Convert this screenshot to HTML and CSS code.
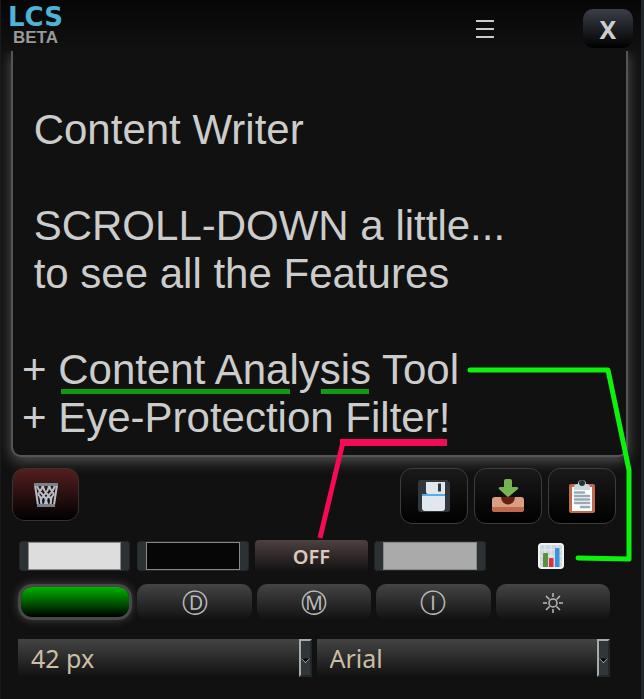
FILE: index.html
```
<!DOCTYPE html>
<html lang="en">
<head>
    <meta charset="UTF-8">
    <meta name="viewport" content="width=device-width, initial-scale=1.0">
    <title>LCS Content Writer</title>
    <link rel="stylesheet" href="styles.css">
</head>
<body>
    <div class="app">
        <header class="topbar">
            <a class="logo" href="#"><span class="logo-name">LCS</span><span class="logo-tag">BETA</span></a>
            <button class="menu-btn" type="button" aria-label="Menu">
                <svg width="20" height="20" viewBox="0 0 20 20">
                    <path d="M1 2h18M1 10h18M1 18h18" stroke="#ccc" stroke-width="2"/>
                </svg>
            </button>
            <button class="close-btn" type="button">X</button>
        </header>

        <textarea class="editor" aria-label="Content" spellcheck="false">
 Content Writer

 SCROLL-DOWN a little...
 to see all the Features

+ Content Analysis Tool
+ Eye-Protection Filter!</textarea>

        <div class="actions">
            <button class="action-btn trash" type="button" aria-label="Clear">
                <svg width="26" height="26" viewBox="0 0 26 26">
                    <path d="M2 3l3 20M24 3l-3 20M4 3q1 5 6 10t1 10M10 3q0 5 5 10t2 10M16 3q1 5 5 9M22 3q-1 5-6 10t-1 10M16 3q0 5-5 10t-2 10M10 3q-1 5-5 9M5 12q4 4 3 11M21 12q-4 4-3 11" fill="none" stroke="#b4bec6" stroke-width="2"/>
                    <path d="M1 1h24v3H1zM4 22h18v3H4z" fill="#78828a"/>
                </svg>
            </button>
            <button class="action-btn save" type="button" aria-label="Save">
                <svg width="34" height="34" viewBox="0 0 34 34">
                    <path d="M4 1h26l3 3v26a3 3 0 0 1-3 3H4a3 3 0 0 1-3-3V4a3 3 0 0 1 3-3z" fill="#31373d"/>
                    <path d="M9 3h19v12H11a2 2 0 0 1-2-2z" fill="#e1e8ed"/>
                    <path d="M21 4.500h3v8h-3z" fill="#31373d"/>
                    <path d="M7 15h19a2 2 0 0 1 2 2v12a3 3 0 0 1-3 3H8a3 3 0 0 1-3-3V17a2 2 0 0 1 2-2z" fill="#e1e8ed"/>
                    <path d="M5 17a2 2 0 0 1 2-2h19a2 2 0 0 1 2 2z" fill="#55acee"/>
                </svg>
            </button>
            <button class="action-btn" type="button" aria-label="Download">
                <svg width="34" height="34" viewBox="0 0 34 34">
                    <path d="M4 18h26a3 3 0 0 1 3 3v9a3 3 0 0 1-3 3H4a3 3 0 0 1-3-3v-9a3 3 0 0 1 3-3z" fill="#da9f83"/>
                    <path d="M1 28h32v2a3 3 0 0 1-3 3H4a3 3 0 0 1-3-3z" fill="#c1694f"/>
                    <path d="M10 18h14a7 7.500 0 0 1-14 0z" fill="#662113"/>
                    <path d="M13 2q0-2 2-2h4q2 0 2 2v6h5q2 0.500 1 2l-9 7.500q-1 0.500-2 0l-8-7.500q-1-1.500 1-2h4z" fill="#77b255"/>
                </svg>
            </button>
            <button class="action-btn" type="button" aria-label="Copy">
                <svg width="34" height="34" viewBox="0 0 34 34">
                    <rect x="4" y="5" width="26" height="29" rx="2" fill="#c1694f"/>
                    <path d="M7 8h20v24H7z" fill="#fff"/>
                    <path d="M9 11V8q0-3 4-3 0-4 4-4t4 4q4 0 4 3v3z" fill="#ccd6dd"/>
                    <circle cx="17" cy="4" r="3" fill="#292f33"/>
                    <path d="M10 13.500h9M10 17h14M10 20.500h14M10 24h14M16 28h8" stroke="#99aab5" stroke-width="2.500" stroke-linecap="round"/>
                </svg>
            </button>
        </div>

        <div class="colors">
            <input class="swatch" type="color" value="#dddddd" aria-label="Text colour">
            <input class="swatch" type="color" value="#060606" aria-label="Background colour">
            <button class="filter-btn" type="button">OFF</button>
            <input class="swatch" type="color" value="#aaaaaa" aria-label="Filter colour">
            <button class="chart-btn" type="button" aria-label="Content analysis">
                <svg width="26" height="26" viewBox="0 0 26 26">
                    <rect x="0.500" y="0.500" width="25" height="25" rx="3" fill="#ccd6dd"/>
                    <path d="M1 7h24M1 13h24M1 19h24M7 1v24M13 1v24M19 1v24" stroke="#e6ecf0" stroke-width="1"/>
                    <rect x="1" y="1" width="24" height="24" rx="3" fill="none" stroke="#f0f4f6" stroke-width="2"/>
                    <path d="M5 24V11q0-1 1-1h3q1 0 1 1v13z" fill="#5c913b"/>
                    <path d="M11 24v-8q0-1 1-1h2.500q1 0 1 1v8z" fill="#dd2e44"/>
                    <path d="M17 24V6q0-1 1-1h2.500q1 0 1 1v18z" fill="#3b94d9"/>
                </svg>
            </button>
        </div>

        <div class="modes">
            <button class="mode-btn active" type="button" aria-label="Normal mode"></button>
            <button class="mode-btn" type="button">Ⓓ</button>
            <button class="mode-btn" type="button">Ⓜ</button>
            <button class="mode-btn" type="button">Ⓘ</button>
            <button class="mode-btn" type="button" aria-label="Brightness">
                <svg width="22" height="22" viewBox="0 0 22 22">
                    <circle cx="11" cy="12" r="4" fill="none" stroke="#bbb" stroke-width="1.500"/>
                    <path d="M11 2v4M11 18v4M1 12h4M17 12h4M4 5l3.500 3.500M14.500 15.500l3.500 3.500M18 5l-3.500 3.500M7.500 15.500l-3.500 3.500" stroke="#bbb" stroke-width="1.500"/>
                </svg>
            </button>
        </div>

        <div class="fonts">
            <div class="select-box">
                <select aria-label="Font size">
                    <option>42 px</option>
                    <option>36 px</option>
                    <option>24 px</option>
                </select>
                <span class="arrow"></span>
            </div>
            <div class="select-box">
                <select aria-label="Font family">
                    <option>Arial</option>
                    <option>Verdana</option>
                    <option>Georgia</option>
                </select>
                <span class="arrow"></span>
            </div>
        </div>

        <!-- hint lines from the text to the controls -->
        <svg class="hints" viewBox="0 0 644 699" preserveAspectRatio="none" fill="none">
            <path d="M61 391.500h229M321 391.500h48" stroke="#129a12" stroke-width="5"/>
            <path d="M343 442L320 538" stroke="#f50a55" stroke-width="5"/>
            <path d="M340 442.500h107" stroke="#f50a55" stroke-width="7"/>
            <path d="M470 370h138l21 100v89l-51-1" stroke="#0df20d" stroke-width="5" stroke-linecap="round" stroke-linejoin="round"/>
        </svg>
    </div>
</body>
</html>
```

FILE: styles.css
```
* {
    box-sizing: border-box;
}
body {
    margin: 0;
    background-color: #111;
    color: #ccc;
    font-family: "Noto Sans", sans-serif;
}
button {
    display: flex;
    align-items: center;
    justify-content: center;
    margin: 0;
    padding: 0;
    border: none;
    color: #ccc;
    font-family: inherit;
    cursor: pointer;
}
.app {
    position: relative;
    min-height: 100vh;
    border-right: 3px solid #23262b;
    border-left: 1px solid #1a1a1a;
    overflow: hidden;
}
.topbar {
    position: relative;
    display: flex;
    align-items: center;
    height: 51px;
    padding: 6px 8px 0 7px;
    background: linear-gradient(#060606, #111);
}
.logo {
    display: flex;
    flex-direction: column;
    align-self: flex-start;
    gap: 2px;
    margin-right: auto;
    text-decoration: none;
}
.logo-name {
    color: #4fb3d5;
    font: bold 26px/22px "DejaVu Sans", sans-serif;
}
.logo-tag {
    padding-left: 5px;
    color: #999;
    font: bold 17px/16px "Liberation Sans", Arial, sans-serif;
}
.menu-btn {
    width: 50px;
    height: 40px;
    margin-right: 73px;
    background: none;
}
.close-btn {
    width: 50px;
    height: 39px;
    border-radius: 10px;
    background: linear-gradient(#3a3f48, #000);
    font-size: 25px;
    font-weight: bold;
}
.editor {
    display: block;
    width: calc(100% - 23px);
    height: 406px;
    margin: 0 0 0 10px;
    padding: 55px 9px 0;
    border: 2px solid #555;
    border-top: none;
    border-radius: 0 0 10px 10px;
    outline: none;
    background-color: #111;
    box-shadow: 0 4px 14px #555;
    color: #ccc;
    font: 42px/48px "Liberation Sans", Arial, sans-serif;
    resize: none;
    overflow: hidden;
}
.actions {
    display: flex;
    gap: 6px;
    padding: 11px 25px 0 11px;
}
.action-btn {
    width: 68px;
    height: 56px;
    border: 1px solid #3c3c3c;
    border-radius: 12px;
    background: linear-gradient(#1a1a1a, #000);
}
.action-btn.trash {
    width: 67px;
    height: 53px;
    margin-right: auto;
    border-color: #393030;
    background: linear-gradient(#541f1f, #000);
}
.colors,
.modes {
    display: grid;
    gap: 5px;
    align-items: center;
    padding: 0 31px 0 17px;
}
.colors {
    grid-template-columns: repeat(4, 113fr) 118fr;
    margin-top: 16px;
}
.modes {
    grid-template-columns: repeat(5, 1fr);
    margin-top: 12px;
}
.swatch {
    justify-self: center;
    width: calc(100% - 2px);
    height: 30px;
    padding: 0 8px;
    border: 1px solid #222829;
    border-radius: 3px;
    background: #2c3233;
    cursor: pointer;
}
.swatch::-webkit-color-swatch-wrapper {
    padding: 0;
}
.swatch::-webkit-color-swatch {
    border: 1px solid #888;
    border-radius: 0;
}
.filter-btn {
    height: 32px;
    border-radius: 4px;
    background: linear-gradient(#4e4041, #111);
    color: #dcc8bc;
    font-size: 20px;
    font-weight: 600;
}
.chart-btn {
    height: 32px;
    background: none;
}
.mode-btn {
    height: 36px;
    border-radius: 10px;
    background: linear-gradient(#444, #111);
    color: #bbb;
    font-size: 26px;
    line-height: 36px;
}
.mode-btn.active {
    border: 3px solid #484848;
    border-radius: 14px;
    background: linear-gradient(#00b400, #000) padding-box;
    box-shadow: 0 0 8px #444;
}
.fonts {
    display: grid;
    grid-template-columns: 1fr 1fr;
    gap: 5px;
    padding: 19px 31px 20px 17px;
}
.select-box {
    position: relative;
}
.select-box select {
    display: block;
    width: 100%;
    height: 38px;
    padding: 0 24px 0 13px;
    border: none;
    border-radius: 0;
    outline: none;
    appearance: none;
    background: linear-gradient(#444, #111);
    color: #cbbfa6;
    font: 25px/38px "Noto Sans", sans-serif;
}
.arrow {
    position: absolute;
    top: 0;
    right: 0;
    bottom: 0;
    display: flex;
    align-items: center;
    justify-content: center;
    width: 13px;
    border: 2px solid;
    border-color: #aaa #222829 #222829 #aaa;
    background-color: #30373a;
    pointer-events: none;
}
.arrow::after {
    content: "";
    width: 6px;
    height: 6px;
    border: solid #aaa;
    border-width: 0 1px 1px 0;
    background-color: #000;
    clip-path: polygon(100% 0, 100% 100%, 0 100%);
    transform: rotate(45deg);
}
.hints {
    position: absolute;
    top: 0;
    left: -1px;
    width: calc(100% + 4px);
    height: 699px;
    pointer-events: none;
}
```
